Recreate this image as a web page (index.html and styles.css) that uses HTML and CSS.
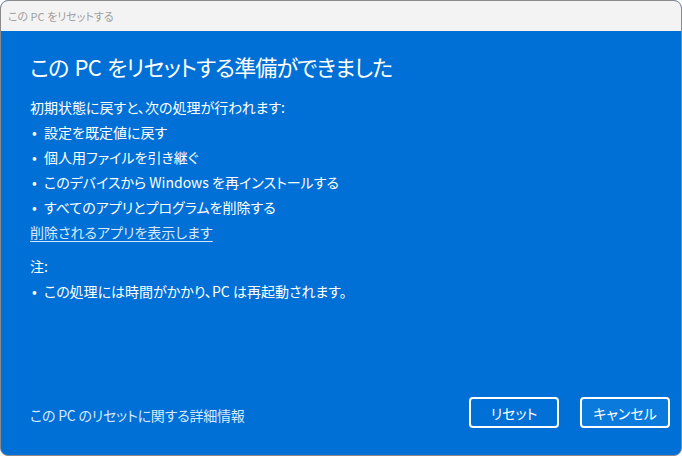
FILE: index.html
```html
<!DOCTYPE html>
<html lang="ja">
<head>
    <meta charset="UTF-8">
    <meta name="viewport" content="width=device-width, initial-scale=1.0">
    <title>この PC をリセットする</title>
    <link rel="stylesheet" href="styles.css">
</head>
<body>
    <div class="window">
        <div class="titlebar">この PC をリセットする</div>
        <div class="content">
            <h1 class="heading">この PC をリセットする準備ができました</h1>
            <p class="intro">初期状態に戻すと、次の処理が行われます:</p>
            <ul class="list">
                <li>設定を既定値に戻す</li>
                <li>個人用ファイルを引き継ぐ</li>
                <li>このデバイスから Windows を再インストールする</li>
                <li>すべてのアプリとプログラムを削除する</li>
            </ul>
            <a class="link" href="#">削除されるアプリを表示します</a>
            <p class="note">注:</p>
            <ul class="list">
                <li>この処理には時間がかかり、PC は再起動されます。</li>
            </ul>
            <div class="footer">
                <a class="more" href="#">この PC のリセットに関する詳細情報</a>
                <div class="buttons">
                    <button class="btn">リセット</button>
                    <button class="btn cancel">キャンセル</button>
                </div>
            </div>
        </div>
    </div>
</body>
</html>
```

FILE: styles.css
```css
html, body {
    margin: 0;
    height: 100%;
    background-color: #ffffff;
}
body {
    font-family: "Noto Sans CJK JP", "Noto Sans", sans-serif;
    font-feature-settings: "palt";
}
.window {
    box-sizing: border-box;
    width: 682px;
    height: 456px;
    border: 1px solid #8a8a8a;
    border-radius: 8px;
    overflow: hidden;
    display: flex;
    flex-direction: column;
    background-color: #0070d6;
}
.titlebar {
    height: 30px;
    line-height: 30px;
    padding-left: 7px;
    background-color: #f3f3f3;
    color: #a0a0a0;
    font-size: 11px;
}
.content {
    flex: 1;
    display: flex;
    flex-direction: column;
    padding: 18px 28px 0 29px;
    color: #ffffff;
    font-size: 14px;
}
.heading {
    margin: 0;
    font-size: 22px;
    font-weight: normal;
    line-height: 34px;
    letter-spacing: -0.85px;
    word-spacing: 2px;
}
.intro {
    margin: 12px 0 0;
    line-height: 25px;
}
.note {
    margin: 9px 0 0;
    line-height: 25px;
}
.list {
    list-style: none;
    margin: 0;
    padding: 0;
}
.list li {
    line-height: 25px;
    padding-left: 14px;
    position: relative;
}
.list li::before {
    content: "•";
    position: absolute;
    left: 2px;
}
.link {
    align-self: flex-start;
    line-height: 25px;
    color: #d6e8fb;
    text-decoration: underline;
    text-underline-offset: 3px;
}
.footer {
    margin-top: auto;
    height: 58px;
    display: flex;
    align-items: flex-start;
    justify-content: space-between;
}
.more {
    color: #d6e8fb;
    text-decoration: none;
    line-height: 31px;
    margin-top: 3px;
    letter-spacing: -0.2px;
}
.buttons {
    display: flex;
    gap: 21px;
    margin-right: -17px;
}
.btn {
    box-sizing: border-box;
    width: 90px;
    height: 31px;
    border: 2px solid #ffffff;
    border-radius: 4px;
    background-color: transparent;
    color: #ffffff;
    font-family: inherit;
    font-size: 14px;
    font-feature-settings: "palt";
    cursor: pointer;
}
.cancel {
    background-color: #0a7bdc;
}
```
